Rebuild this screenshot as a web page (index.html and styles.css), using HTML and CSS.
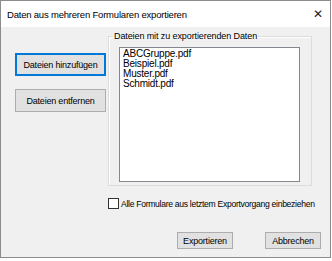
FILE: index.html
```html
<!DOCTYPE html>
<html>
  <head>
    <meta charset="UTF-8" />
    <title>Daten aus mehreren Formularen exportieren</title>
    <link rel="stylesheet" href="styles.css">
  </head>
  <body>
    <div class="window">
      <div class="titlebar">
        <span class="title">Daten aus mehreren Formularen exportieren</span>
        <span class="close">&#x2715;</span>
      </div>
      <div class="content">
        <div class="main">
          <div class="actions">
            <button class="btn btn-wide btn-focus">Dateien hinzufügen</button>
            <button class="btn btn-wide">Dateien entfernen</button>
          </div>
          <fieldset class="group">
            <legend>Dateien mit zu exportierenden Daten</legend>
            <ul class="filelist">
              <li>ABCGruppe.pdf</li>
              <li>Beispiel.pdf</li>
              <li>Muster.pdf</li>
              <li>Schmidt.pdf</li>
            </ul>
          </fieldset>
        </div>
        <label class="option">
          <span class="check"></span>
          Alle Formulare aus letztem Exportvorgang einbeziehen
        </label>
        <div class="footer">
          <button class="btn">Exportieren</button>
          <button class="btn">Abbrechen</button>
        </div>
      </div>
    </div>
  </body>
</html>
```

FILE: styles.css
```css
* {
  margin: 0;
  box-sizing: border-box;
  font-family: "Liberation Sans", Arial, sans-serif;
}

body {
  background: #fff;
}

.window {
  width: 331px;
  height: 258px;
  border: 1px solid #8c8c8c;
  background: #f0f0f0;
  display: flex;
  flex-direction: column;
}

.titlebar {
  height: 26px;
  background: #fff;
  display: flex;
  align-items: center;
  justify-content: space-between;
  padding: 0 7px 0 6px;
}

.title {
  font-size: 9.5px;
  letter-spacing: -0.2px;
  color: #000;
}

.close {
  font-size: 12px;
  color: #222;
}

.content {
  flex: 1;
  padding: 4px 0 0 14px;
}

.main {
  display: flex;
}

.actions {
  display: flex;
  flex-direction: column;
  gap: 13px;
  padding-top: 22px;
  width: 93px;
}

.btn {
  font-size: 9px;
  letter-spacing: -0.2px;
  color: #000;
  background: #e1e1e1;
  border: 1px solid #adadad;
  height: 17px;
  padding: 0;
}

.btn-wide {
  width: 91px;
  height: 23px;
}

.btn-focus {
  border: 2px solid #0078d7;
}

.group {
  width: 204px;
  height: 155px;
  border: 1px solid #dcdcdc;
  box-shadow: inset 1px 1px #fff;
  padding: 0 11px 0 10px;
}

.group legend {
  font-size: 9px;
  letter-spacing: -0.1px;
  padding: 0 1px;
  margin-left: -6px;
}

.filelist {
  list-style: none;
  margin-top: 6px;
  padding: 1px 0 0 3px;
  height: 135px;
  background: #fff;
  border: 1px solid #828790;
}

.filelist li {
  font-size: 10px;
  letter-spacing: -0.2px;
  line-height: 10px;
}

.option {
  display: flex;
  align-items: center;
  gap: 2px;
  margin: 12px 0 0 93px;
  font-size: 8.6px;
  letter-spacing: -0.3px;
  white-space: nowrap;
}

.check {
  width: 11px;
  height: 11px;
  border: 1px solid #333;
  background: #fff;
}

.footer {
  display: flex;
  justify-content: flex-end;
  gap: 32px;
  margin: 23px 9px 0 0;
}

.footer .btn {
  width: 56px;
}
```
